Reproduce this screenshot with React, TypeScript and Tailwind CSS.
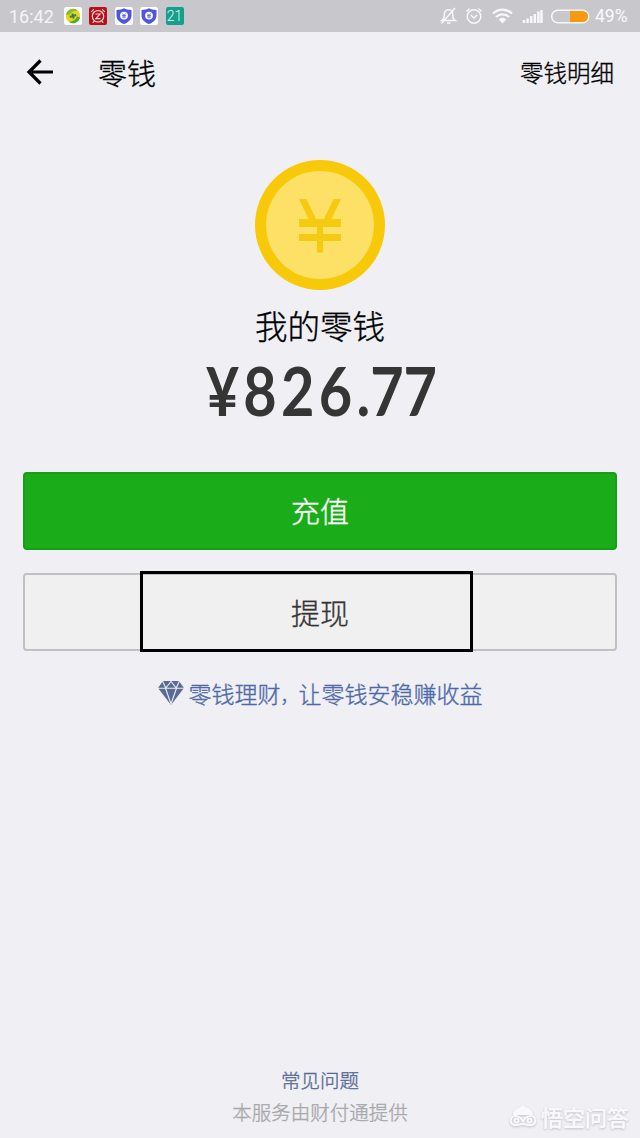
const cjk = "font-['Noto_Sans_CJK_SC',sans-serif]"

function StockIcon() {
    return (
        <svg viewBox="0 0 18 18" className="h-[18px] w-[18px]">
            <rect width="18" height="18" rx="2.5" fill="#fff" />
            <circle cx="9" cy="9" r="7.200" fill="#f0d21e" />
            <path d="M2 7.500A7.200 7.200 0 0 1 14 3.800C10 3.400 6.500 5 5.200 8.200Z" fill="#7fbf35" />
            <path d="M16 10.500A7.200 7.200 0 0 1 5 15C9 14.500 12 13 13 9.600Z" fill="#4fa83a" />
            <path d="M5.800 10 12.200 8M8.300 6.500l1.400 5" stroke="#2b8a35" strokeWidth="2" />
        </svg>
    )
}

function AlarmAppIcon() {
    return (
        <svg viewBox="0 0 18 18" className="h-[18px] w-[18px]" fill="none" stroke="#f6d5d5" strokeLinecap="round">
            <rect width="18" height="18" rx="2" fill="#b80f1b" stroke="none" />
            <circle cx="9" cy="9.300" r="5.700" strokeWidth="1.200" />
            <path d="M6.800 7h4.400l-4.400 4.600h4.400" strokeWidth="1.100" />
            <path d="M2.500 4.600 4.600 2.600M13.400 2.600l2.100 2M5 14.300l-1 1.200M13 14.300l1 1.200" strokeWidth="1.100" />
        </svg>
    )
}

function ShieldIcon() {
    return (
        <svg viewBox="0 0 18 18" className="h-[18px] w-[18px]">
            <rect width="18" height="18" rx="2.500" fill="#fff" />
            <path d="M9 1.300c2 1.300 4.500 1.700 7.500 1.700v5.500c0 4.300-3.500 7-7.500 8.500-4-1.500-7.500-4.200-7.500-8.500V3c3 0 5.500-.4 7.500-1.700Z" fill="#4f55dc" />
            <circle cx="9" cy="8.600" r="3.900" fill="#fff" />
            <path d="m7.200 6.400 1.800 2 1.800-2M7 8.500h4M7 10h4M9 8.500v2.700" fill="none" stroke="#4f55dc" strokeWidth=".8" />
        </svg>
    )
}

function StatusBar() {
    return (
        <header className="flex h-8 shrink-0 items-center bg-[#c8c8cc] pl-[9px] pr-[10px] font-['Roboto',sans-serif] text-[17.500px] font-normal text-white/90 [-webkit-text-stroke:0]">
            <span className="w-[54.500px] text-[18px] text-white/80">16:42</span>
            <div className="flex gap-[7.500px]">
                <StockIcon />
                <AlarmAppIcon />
                <ShieldIcon />
                <ShieldIcon />
                <span className="flex h-[18px] w-[18px] items-center justify-center rounded-[2px] bg-[#14a08c] text-[14px] font-light text-white/90">21</span>
            </div>
            <svg viewBox="0 0 156 32" className="ml-auto h-8 w-[156px]" fill="none" stroke="#f8f8fa" strokeWidth="1.500">
                {/* muted bell */}
                <path d="M3 20.500c1.700-1 2.200-2.500 2.200-5 0-3.500 1.700-5.800 4.300-5.800s4.300 2.300 4.300 5.800c0 2.500.5 4 2.200 5ZM8 23h3.500M16 8 2.500 23.500" />
                {/* alarm clock */}
                <circle cx="35" cy="16.500" r="6.800" />
                <path d="m31.800 15 3.200 3 3.200-3M27.500 11.500l3-3M39.500 8.500l3 3" />
                {/* wifi */}
                <path d="M54 13.500c5.500-5.300 13.500-5.300 19 0M57 17c3.800-3.600 9.200-3.600 13 0" strokeWidth="2.300" />
                <path d="M59.700 19.500c2.400-2.200 5.200-2.200 7.600 0l-3.800 4Z" fill="#f8f8fa" stroke="none" />
                {/* signal */}
                <path d="M85 23v-3M88.600 23v-4.500M92.200 23v-7M95.800 23V14M99.400 23V11.500M102.500 23V10" strokeWidth="2.500" />
                {/* battery */}
                <rect x="112.700" y="10.200" width="37" height="12.600" rx="6.300" />
                <path d="M131 11h12.500a5.500 5.500 0 0 1 0 11H131Z" fill="#f9990f" stroke="none" />
            </svg>
            <span className="w-[35px] whitespace-nowrap">49%</span>
        </header>
    )
}

function Coin() {
    return (
        <svg viewBox="0 0 130 130" className="h-[130px] w-[130px]">
            <circle cx="65" cy="65" r="65" fill="#f7c908" />
            <circle cx="65" cy="65" r="54" fill="#fde066" />
            <path d="M44 39h7.500l9.500 20h8l9.500-20H86l-9.500 20H86v8H68v7h18v7H68v11.500h-6V81H44v-7h18v-7H44v-8h9.500Z" fill="#f7ca12" />
        </svg>
    )
}

function Diamond() {
    return (
        <svg viewBox="0 0 26 24" className="h-6 w-[26px]">
            <path d="M5 0h16l5 7-13 17L0 7Z" fill="#576b95" />
            <path d="M0 7.200h26M4.500 0l3.300 7L13 .5 18.200 7l3.300-7M7.500 7.200 13 23l5.500-15.800" fill="none" stroke="#efeff4" strokeWidth="1.100" />
        </svg>
    )
}

function Watermark() {
    return (
        <div className="absolute bottom-[8px] left-[509px] flex items-center gap-[4px] text-[#f9f9fb] drop-shadow-[0_1px_1px_#c0c0c5]">
            <svg viewBox="0 0 28 24" className="h-6 w-7" fill="none" stroke="currentColor" strokeWidth="2">
                <path d="M4 11C4 5 9 5 14 1c5 4 10 4 10 10Z" fill="currentColor" stroke="none" />
                <path d="M14 17.500c-2-4-5-6-8.500-5.500C.5 13 .5 20 5.500 21c3 .5 4-1 8.500-1s5.500 1.500 8.500 1c5-1 5-8 0-9-3.500-.5-6.500 1.500-8.500 5.500Z" />
                <circle cx="7.500" cy="16.500" r="2" />
                <circle cx="20.500" cy="16.500" r="2" />
            </svg>
            <span className="whitespace-nowrap text-[22px] font-medium leading-7">悟空问答</span>
        </div>
    )
}

export default function App() {
    return (
        <div className={`${cjk} relative flex h-[1138px] w-[640px] flex-col overflow-hidden bg-[#efeff4] font-light text-black [-webkit-text-stroke:0.35px]`}>
            <StatusBar />
            <nav className="flex h-20 shrink-0 items-center pl-[26px] pr-[26px]">
                <svg viewBox="0 0 28 26" className="h-[26px] w-7" fill="none" stroke="#000" strokeWidth="3.200">
                    <path d="M14.500 1.500 3 13l11.500 11.500M2.500 13H27" />
                </svg>
                <h1 className="ml-[44px] text-[29px] leading-10">零钱</h1>
                <a className="ml-auto text-[23.500px] leading-10">零钱明细</a>
            </nav>

            <main className="flex flex-col items-center px-[23px] pt-12">
                <Coin />
                <p className="mt-[11px] text-[32.500px] leading-[48px]">我的零钱</p>
                <p className="mt-px flex h-[80px] scale-x-[.86] items-center whitespace-nowrap pl-[3px] font-['Lato',sans-serif] text-[67px] font-bold text-[#353535] [-webkit-text-stroke:0]">
                    <span className="tracking-[5px]">¥826</span>
                    <span>.77</span>
                </p>
                <button className="mt-[42px] h-[78px] w-full rounded-[4px] border-2 border-[#179e19] bg-[#1aad19] text-[29px] text-white">
                    充值
                </button>
                <button className="relative mt-[23px] h-[78px] w-full rounded-[4px] border-2 border-[#c1c1c3] bg-[#f0f0f0] pt-px text-[29px] text-[#353535]">
                    提现
                    <span className="absolute -top-[4px] left-[115px] h-[81px] w-[333px] border-3 border-black" />
                </button>
                <div className="mt-[22px] flex h-10 items-center gap-[5px] text-[23px] text-[#4d69a8]">
                    <Diamond />
                    <span className="whitespace-nowrap">零钱理财<span className="text-[18px]">，</span>让零钱安稳赚收益</span>
                </div>
            </main>

            <footer className="mt-auto flex flex-col items-center pb-[10px]">
                <a className="text-[19.500px] leading-8 text-[#576b95]">常见问题</a>
                <p className="text-[19.500px] leading-8 text-[#a8a8aa]">本服务由财付通提供</p>
            </footer>
            <Watermark />
        </div>
    )
}
